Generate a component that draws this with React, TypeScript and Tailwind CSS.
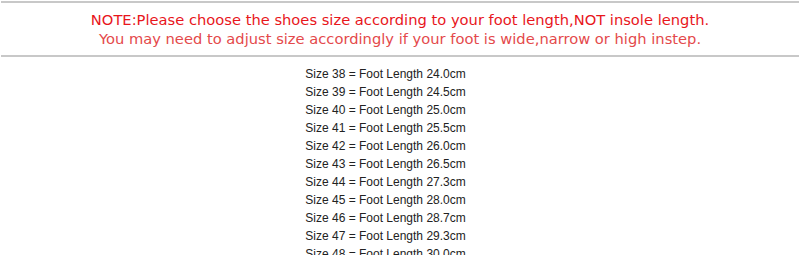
const sizes: [number, string][] = [
  [38, "24.0"],
  [39, "24.5"],
  [40, "25.0"],
  [41, "25.5"],
  [42, "26.0"],
  [43, "26.5"],
  [44, "27.3"],
  [45, "28.0"],
  [46, "28.7"],
  [47, "29.3"],
  [48, "30.0"],
];

export default function App() {
  return (
    <div className="h-[255px] w-[800px] overflow-hidden bg-white">
      <div className="mx-[1px] mt-[1px] border-y-2 border-[#c8c8c8] py-[7px] text-center font-['DejaVu_Sans',Verdana,sans-serif] text-[14.7px] leading-[19px]">
        <p className="text-[#e8161c]">
          NOTE:Please choose the shoes size according to your foot length,NOT insole length.
        </p>
        <p className="text-[#e4494b]">
          You may need to adjust size accordingly if your foot is wide,narrow or high instep.
        </p>
      </div>
      <ul className="pr-[29px] pt-[8px] text-center font-['Liberation_Sans',Arial,sans-serif] text-[12px] leading-[18px] text-[#222]">
        {sizes.map(([s, l]) => (
          <li key={s}>
            Size {s} = Foot Length {l}cm
          </li>
        ))}
      </ul>
    </div>
  );
}
